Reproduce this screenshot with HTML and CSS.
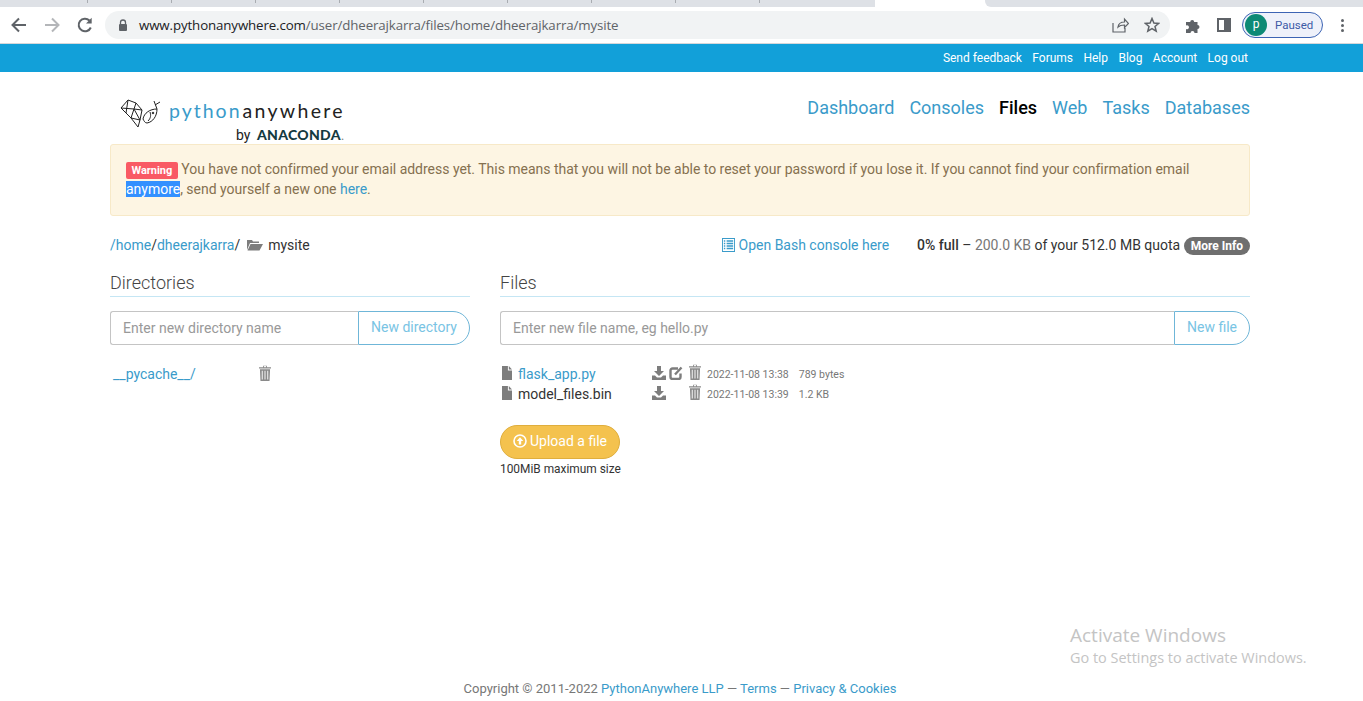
FILE: index.html
```html
<!DOCTYPE HTML>
<html>
<head>
<title>Files</title>
<link rel="stylesheet" href="styles.css">
</head>
<body>
<div class="tabstrip">
    <div class="tab tab-first"></div>
    <div class="tab"></div>
    <div class="tab"></div>
    <div class="tab"></div>
    <div class="tab"></div>
    <div class="tab"></div>
    <div class="tab"></div>
    <div class="tab"></div>
    <div class="tab"></div>
    <div class="tab tab-last"></div>
    <div class="tab-active"></div>
    <div class="tab-rest"></div>
</div>
<div class="toolbar">
    <svg class="tool-btn" width="18" height="18" viewBox="0 0 18 18"><path d="M16 9H3M9 2.500 2.500 9 9 15.500" fill="none" stroke="#5f6368" stroke-width="2"/></svg>
    <svg class="tool-btn tool-fwd" width="18" height="18" viewBox="0 0 18 18"><path d="M2 9h13M9 2.500 15.500 9 9 15.500" fill="none" stroke="#b4b6b9" stroke-width="2"/></svg>
    <svg class="tool-btn tool-reload" width="18" height="18" viewBox="0 0 18 18"><path d="M14.800 11.500A6.300 6.300 0 1 1 13.400 4.500" fill="none" stroke="#5f6368" stroke-width="2"/><path d="M15.700 1.800v5.700H10z" fill="#5f6368"/></svg>
    <div class="omnibox">
        <svg width="10" height="13" viewBox="0 0 10 13"><path d="M2.500 5V3.500a2.500 2.500 0 0 1 5 0V5" fill="none" stroke="#5f6368" stroke-width="1.300"/><rect x="1" y="5" width="8" height="7" rx="1" fill="#5f6368"/></svg>
        <div class="url"><span class="url-host">www.pythonanywhere.com</span>/user/dheerajkarra/files/home/dheerajkarra/mysite</div>
        <svg class="omni-share" width="17" height="16" viewBox="0 0 17 16"><path d="M1 6v9h12v-4M6 10c.5-3.500 3-5 6.500-5V2l4 4.500-4 4V8C9.500 8 7.500 8.500 6 10z" fill="none" stroke="#5f6368" stroke-width="1.200"/></svg>
        <svg class="omni-star" width="16" height="16" viewBox="0 0 16 16"><path d="M8 1.500 9.900 6l4.800.4-3.700 3.100 1.200 4.700L8 11.700l-4.200 2.500L5 9.500 1.300 6.400 6.100 6z" fill="none" stroke="#5f6368" stroke-width="1.500"/></svg>
    </div>
    <svg class="ext" width="15" height="15" viewBox="0 0 15 15"><path d="M0 4h4.200a2 2 0 1 1 4 0h3.300v3a2 2 0 1 1 0 4v4H8.500a2 2 0 1 0-4 0H0v-4a2 2 0 1 0 0-3.500z" fill="#5f6368"/></svg>
    <div class="sidepanel"><div class="sidepanel-dark"></div></div>
    <div class="profile"><span class="avatar">p</span><span class="paused">Paused</span></div>
    <div class="menu-dots"><i></i><i></i><i></i></div>
</div>

<div class="topbar">
    <div class="topbar-links">
        <a>Send feedback</a><a>Forums</a><a>Help</a><a>Blog</a><a>Account</a><a class="logout">Log out</a>
    </div>
</div>

<div class="container">
    <div class="header">
        <div class="logo">
            <svg class="logo-mark" width="40" height="30" viewBox="0 0 40 30" fill="none" stroke="#222" stroke-width="1">
                <path d="M1 9 8 1l8 3 6 7-2 10-2 7-7-9zM8 1 6 14M1 9l13 1M16 4l-2 6 8 1M14 10l-3 9 9 2M14 10l6 11"/>
                <path d="M23 20c1-6 7-10 14-10 0 7-4 13-10 14-2 0-3-2-4-4zM37 10l-3-8M35 6l5-3M28 22c3-3 3-6 2-9"/>
                <circle cx="33" cy="14" r=".8" fill="#222"/>
            </svg>
            <div class="logo-text">
                <div class="logo-name"><span class="logo-python">python</span>anywhere</div>
                <div class="logo-by">by <b>ANACONDA</b><span class="logo-dot">.</span></div>
            </div>
        </div>
        <nav class="mainnav">
            <a>Dashboard</a><a>Consoles</a><a class="current">Files</a><a>Web</a><a>Tasks</a><a>Databases</a>
        </nav>
    </div>

    <div class="alert">
        <span class="label-warn">Warning</span> You have not confirmed your email address yet. This means that you will not be able to reset your password if you lose it. If you cannot find your confirmation email <span class="selected">anymore</span>, send yourself a new one <a>here</a>.
    </div>

    <div class="pathrow">
        <div class="breadcrumbs">
            <a>/home</a>/<a>dheerajkarra</a>/
            <svg class="folder" width="17" height="13" viewBox="0 0 17 13"><path d="M1 12V2h5l1 1.500h6V5H4L1 12zM4.500 6H17l-3.500 6.500H1.500z" fill="#7d7d7d"/></svg>
            <span class="cwd">mysite</span>
        </div>
        <div class="pathinfo">
            <a class="bash">
                <svg width="13" height="14" viewBox="0 0 14 14" preserveAspectRatio="none"><rect x=".5" y=".5" width="13" height="13" fill="none" stroke="#3a9bca"/><path d="M2 3h1.500M5 3h7M2 5.500h1.500M5 5.500h7M2 8h1.500M5 8h7M2 10.500h1.500M5 10.500h7" stroke="#3a9bca" stroke-width="1.300"/></svg>
                Open Bash console here
            </a>
            <div class="quota"><b>0% full</b> – <span class="quota-used">200.0 KB</span> of your 512.0 MB quota <span class="badge">More Info</span></div>
        </div>
    </div>

    <div class="columns">
        <div class="col-dirs">
            <h4 class="section-title">Directories</h4>
            <div class="inputgroup">
                <div class="textfield">Enter new directory name</div>
                <div class="addon addon-dir">New directory</div>
            </div>
            <div class="dir-row">
                <a class="dir-name">__pycache__/</a>
                <svg class="trash" width="12" height="16" viewBox="0 0 13 15" preserveAspectRatio="none"><use href="#trash"/></svg>
            </div>
        </div>
        <div class="col-files">
            <h4 class="section-title">Files</h4>
            <div class="inputgroup">
                <div class="textfield">Enter new file name, eg hello.py</div>
                <div class="addon addon-file">New file</div>
            </div>
            <div class="file-list">
                <div class="file-row">
                    <svg class="file-ico" width="10" height="14" viewBox="0 0 11 14" preserveAspectRatio="none"><use href="#file"/></svg>
                    <a class="file-name">flask_app.py</a>
                    <svg class="act" width="14" height="14" viewBox="0 0 14 14"><use href="#download"/></svg>
                    <svg class="act" width="14" height="14" viewBox="0 0 14 14"><use href="#edit"/></svg>
                    <svg class="act-trash" width="12" height="16" viewBox="0 0 13 15" preserveAspectRatio="none"><use href="#trash"/></svg>
                    <span class="file-date">2022-11-08 13:38</span><span class="file-size">789 bytes</span>
                </div>
                <div class="file-row">
                    <svg class="file-ico" width="10" height="14" viewBox="0 0 11 14" preserveAspectRatio="none"><use href="#file"/></svg>
                    <span class="file-name">model_files.bin</span>
                    <svg class="act" width="14" height="14" viewBox="0 0 14 14"><use href="#download"/></svg>
                    <span class="act"></span>
                    <svg class="act-trash" width="12" height="16" viewBox="0 0 13 15" preserveAspectRatio="none"><use href="#trash"/></svg>
                    <span class="file-date">2022-11-08 13:39</span><span class="file-size">1.2 KB</span>
                </div>
            </div>
            <div class="upload">
                <svg width="14" height="14" viewBox="0 0 14 14"><circle cx="7" cy="7" r="6" fill="none" stroke="#fff" stroke-width="1.600"/><path d="M7 3.200 10.300 7H8.200v3.500H5.800V7H3.700z" fill="#fff"/></svg>
                Upload a file
            </div>
            <div class="upload-note">100MiB maximum size</div>
        </div>
    </div>
</div>

<footer class="footer">Copyright © 2011-2022 <a>PythonAnywhere LLP</a> — <a>Terms</a> — <a>Privacy &amp; Cookies</a></footer>

<div class="activate">
    <div class="activate-title">Activate Windows</div>
    <div class="activate-sub">Go to Settings to activate Windows.</div>
</div>

<svg class="defs" width="0" height="0">
    <defs>
        <g id="trash" fill="#8a8a8a"><path d="M4.500 2V.6h4V2H13v1.300H0V2zM5.500 1v1h2V1z"/><path d="M1 4h11l-.6 11H1.600zM3 5.500v8h1v-8zM6 5.500v8h1v-8zM9 5.500v8h1v-8z" fill-rule="evenodd"/></g>
        <g id="file" fill="#7d7d7d"><path d="M0 0h6.500v4.500H11V14H0z"/><path d="M7.500 0 11 3.500H7.500z"/></g>
        <g id="download" fill="#7d7d7d"><path d="M5 0h4v5h3L7 10 2 5h3z"/><path d="M0 9.500h3L5 11.500h4l2-2h3V14H0z"/></g>
        <g id="edit" fill="none" stroke="#7d7d7d"><path d="M9 2.500H3.500A2 2 0 0 0 1.500 4.500v6.500a2 2 0 0 0 2 2h6a2 2 0 0 0 2-2V7.500" stroke-width="2.400"/><path d="M6 8.500 12.500 1.500" stroke-width="2.400"/></g>
    </defs>
</svg>
</body>
</html>
```

FILE: styles.css
```css
html, body {margin: 0; padding: 0;}
body {font-family: Roboto, "Liberation Sans", sans-serif; font-size: 14px; color: #333; height: 701px; overflow: hidden; position: relative; background: #fff;}
a {color: #3a9bca; text-decoration: none;}

.tabstrip {display: flex; height: 7px; background: #fff;}
.tab {flex: 0 0 84px; height: 7px; background: linear-gradient(#a9acb1, #a9acb1) right top / 1px 3px no-repeat #dee1e6;}
.tab-first {flex-basis: 88px;}
.tab-last {flex-basis: 115px; background: #dee1e6;}
.tab-active {width: 110px;}
.tab-rest {flex: 1; background: #dee1e6; border-radius: 0 0 0 6px;}

.toolbar {display: flex; align-items: center; height: 36px; padding-left: 10px; border-bottom: 1px solid #d5d7da; box-sizing: content-box;}
.tool-fwd {margin-left: 15px;}
.tool-reload {margin-left: 15px;}
.omnibox {display: flex; align-items: center; width: 1065px; height: 28px; margin-left: 11px; padding-left: 13px; box-sizing: border-box; background: #f1f3f4; border-radius: 14px;}
.url {margin-left: 11px; font-size: 13.300px; color: #5f6368; font-family: "Open Sans", Roboto, sans-serif; letter-spacing: -.12px; width: 973px; white-space: nowrap;}
.url-host {color: #202124;}
.omni-star {margin-left: 15px;}
.ext {margin-left: 16px;}
.sidepanel {display: flex; justify-content: flex-end; width: 10px; height: 10px; margin-left: 16px; border: 2px solid #5f6368;}
.sidepanel-dark {width: 5px; background: #5f6368;}
.profile {display: flex; align-items: center; width: 81px; height: 26px; margin-left: 11px; border: 1px solid #3c64b4; border-radius: 14px; background: #eef1fa; box-sizing: border-box;}
.avatar {width: 22px; height: 22px; margin-left: 2px; border-radius: 50%; background: #0d8a75; color: #fff; font-size: 12px; text-align: center; line-height: 20px;}
.paused {margin-left: 8px; font-size: 11.500px; color: #3c5aa6;}
.menu-dots {display: flex; flex-direction: column; gap: 2px; margin-left: 18px;}
.menu-dots i {display: block; width: 3px; height: 3px; border-radius: 50%; background: #5f6368;}

.topbar {height: 28px; background: #12a0d9;}
.topbar-links {display: flex; justify-content: flex-end; width: 1248px; line-height: 28px; font-size: 12px;}
.topbar-links a {color: #fff; margin-left: 10.400px;}

.container {width: 1140px; margin: 0 0 0 110px;}
.header {display: flex; justify-content: space-between; height: 72px;}
.logo {display: flex; margin: 26px 0 0 10px;}
.logo-mark {margin-top: 1px;}
.logo-text {margin-left: 9px;}
.logo-name {font-family: Lato, sans-serif; font-weight: 400; font-size: 19.500px; letter-spacing: 2.300px; color: #222; line-height: 25px;}
.logo-python {color: #3a9bca; letter-spacing: 2px; margin-right: 1px;}
.logo-by {margin: 4px 0 0 67px; font-size: 14px; color: #222; line-height: 16px;}
.logo-by b {margin-left: 3px; font-family: Lato, sans-serif; font-weight: 900; color: #143a41; font-size: 14px; letter-spacing: .3px;}
.logo-dot {color: #888;}
.mainnav {display: flex; margin-top: 25px; font-size: 18px; line-height: 22px;}
.mainnav a {margin-left: 15px;}
.mainnav .current {color: #000; font-weight: 500;}

.alert {height: 72px; box-sizing: border-box; padding: 14px 15px; background: #fdf5e3; border: 1px solid #f7e9c8; border-radius: 3px; color: #85704f; line-height: 20px; letter-spacing: -.015px;}
.label-warn {display: inline-block; background: #f95a64; color: #fff; font-size: 11px; font-weight: 700; line-height: 13px; padding: 2px 5.500px; border-radius: 2px; vertical-align: 0;}
.selected {background: #3390ff; color: #fff; padding: 0;}
.alert a {color: #3a9bca;}

.pathrow {display: flex; justify-content: space-between; margin-top: 19px; height: 20px; line-height: 20px;}
.breadcrumbs {color: #333;}
.folder {margin: 0 2px 0 2px; vertical-align: -1px;}
.pathinfo {display: flex;}
.bash svg {vertical-align: -2px; margin-left: 1px;}
.quota {margin-left: 28px;}
.quota b {font-weight: 500;}
.quota-used {color: #777;}
.badge {display: inline-block; height: 18px; padding: 0 7px; border-radius: 9px; background: #6f6f6f; color: #fff; font-size: 12px; font-weight: 700; line-height: 18px;}

.columns {display: flex; gap: 30px; margin-top: 15px;}
.col-dirs {width: 360px;}
.col-files {flex: 1;}
.section-title {margin: 0; height: 26px; border-bottom: 1px solid #c5e6f4; font-size: 18px; font-weight: 300; line-height: 25px; color: #444;}
.inputgroup {display: flex; height: 34px; margin-top: 14px;}
.textfield {flex: 1; padding-left: 12px; border: 1px solid #c4c4c4; border-right: 0; border-radius: 3px 0 0 3px; color: #999; line-height: 33px; box-sizing: border-box;}
.addon {box-sizing: border-box; padding-left: 12px; border: 1px solid #6fb6d8; border-radius: 0 17px 17px 0; color: #79c4e4; line-height: 30px;}
.addon-dir {width: 112px;}
.addon-file {width: 76px;}

.dir-row {display: flex; align-items: center; margin-top: 19px; height: 20px; padding-left: 3px;}
.dir-name {width: 146px;}
.trash {margin-top: -3px;}

.file-list {margin-top: 19px;}
.file-row {display: flex; align-items: center; height: 20px;}
.file-ico {margin: -2px 6px 0 2px;}
.file-name {width: 134px;}
.act {width: 14px; margin-right: 3px; margin-top: -2px;}
.act-trash {margin: -5px 0 0 3px;}
.file-date {margin-left: 6px; font-size: 10.500px; color: #777;}
.file-size {margin-left: 10px; font-size: 10.500px; color: #777;}

.upload {display: flex; align-items: center; gap: 3px; width: 120px; height: 34px; margin-top: 21px; box-sizing: border-box; padding: 0 0 2px 12px; background: #f4c24e; border: 1px solid #dfae3d; border-radius: 17px; color: #fff;}
.upload-note {margin-top: 3px; font-size: 11.900px; color: #333; line-height: 15px;}

.footer {position: absolute; left: 0; right: 0; top: 681px; padding-right: 3px; text-align: center; font-size: 13px; line-height: 16px; color: #777;}

.activate {position: absolute; left: 1070px; top: 623px; color: #c4c4c4;}
.activate-title {font-family: "Open Sans", sans-serif; font-size: 19px; line-height: 24px;}
.activate-sub {font-family: "Open Sans", sans-serif; font-size: 14.450px; line-height: 20px; margin-top: 1px; white-space: nowrap;}
.defs {position: absolute;}
```
